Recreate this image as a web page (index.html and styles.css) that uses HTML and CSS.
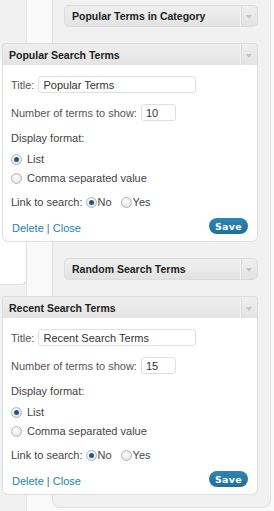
FILE: index.html
```html
<!DOCTYPE html>
<html lang="en">
<head>
    <meta charset="UTF-8">
    <meta name="viewport" content="width=device-width, initial-scale=1.0">
    <title>Widgets</title>
    <link rel="stylesheet" href="styles.css">
</head>
<body>
    <div class="page">
        <div class="left-pane">
            <div class="left-box"></div>
        </div>

        <div class="column">
            <div class="sidebar">

                <div class="widget">
                    <div class="widget-top">
                        <span class="widget-title">Popular Terms in Category</span>
                        <span class="widget-arrow"></span>
                    </div>
                </div>

                <div class="widget open">
                    <div class="widget-top">
                        <span class="widget-title">Popular Search Terms</span>
                        <span class="widget-arrow"></span>
                    </div>
                    <div class="widget-inside">
                        <div class="row field">
                            <label>Title:</label>
                            <input class="text-input wide" type="text" value="Popular Terms">
                        </div>
                        <div class="row field gap-md">
                            <label>Number of terms to show:</label>
                            <input class="text-input short" type="text" value="10">
                        </div>
                        <div class="row line gap-sm">Display format:</div>
                        <div class="row line gap-xs">
                            <span class="radio checked"></span><span>List</span>
                        </div>
                        <div class="row line gap-xxs">
                            <span class="radio"></span><span>Comma separated value</span>
                        </div>
                        <div class="row line gap-sm">
                            <span>Link to search:</span>
                            <span class="radio checked inline"></span><span>No</span>
                            <span class="radio inline far"></span><span>Yes</span>
                        </div>
                        <div class="row actions">
                            <span class="links"><a href="#">Delete</a> | <a href="#">Close</a></span>
                            <button class="save-btn">Save</button>
                        </div>
                    </div>
                </div>

                <div class="widget">
                    <div class="widget-top">
                        <span class="widget-title">Random Search Terms</span>
                        <span class="widget-arrow"></span>
                    </div>
                </div>

                <div class="widget open">
                    <div class="widget-top">
                        <span class="widget-title">Recent Search Terms</span>
                        <span class="widget-arrow"></span>
                    </div>
                    <div class="widget-inside">
                        <div class="row field">
                            <label>Title:</label>
                            <input class="text-input wide" type="text" value="Recent Search Terms">
                        </div>
                        <div class="row field gap-md">
                            <label>Number of terms to show:</label>
                            <input class="text-input short" type="text" value="15">
                        </div>
                        <div class="row line gap-sm">Display format:</div>
                        <div class="row line gap-xs">
                            <span class="radio checked"></span><span>List</span>
                        </div>
                        <div class="row line gap-xxs">
                            <span class="radio"></span><span>Comma separated value</span>
                        </div>
                        <div class="row line gap-sm">
                            <span>Link to search:</span>
                            <span class="radio checked inline"></span><span>No</span>
                            <span class="radio inline far"></span><span>Yes</span>
                        </div>
                        <div class="row actions">
                            <span class="links"><a href="#">Delete</a> | <a href="#">Close</a></span>
                            <button class="save-btn">Save</button>
                        </div>
                    </div>
                </div>

            </div>
        </div>
    </div>
</body>
</html>
```

FILE: styles.css
```css
body {
    margin: 0;
    height: 511px;
    overflow: hidden;
    background-color: #f1f1f1;
    color: #333333;
    font-family: 'Liberation Sans', Arial, sans-serif;
    font-size: 11px;
}

.page {
    display: flex;
    height: 511px;
}

.left-pane {
    width: 27px;
    flex-shrink: 0;
    padding-top: 60px;
    margin-right: -1px;
    position: relative;
    z-index: 0;
}

.left-box {
    height: 224px;
    background-color: #ffffff;
    border-right: 1px solid #dfdfdf;
    border-bottom: 1px solid #dfdfdf;
    border-bottom-right-radius: 6px;
}

.column {
    flex: 1;
    background-color: #f9f9f9;
    border-left: 1px solid #e3e3e3;
    padding-left: 25px;
}

.sidebar {
    width: 206px;
    height: 502px;
    background-color: #f1f1f1;
    border: 1px solid #dfdfdf;
    border-top: none;
    border-radius: 0 0 8px 8px;
    padding-top: 5px;
    padding-left: 11px;
    box-sizing: content-box;
    position: relative;
    z-index: 1;
}

.sidebar > .widget {
    margin-bottom: 16px;
    width: 194px;
}

.sidebar > .widget.open {
    margin-left: -62px;
    width: 256px;
}

.widget-top {
    display: flex;
    align-items: center;
    height: 20px;
    background: linear-gradient(to bottom, #efefef, #e3e3e3);
    border: 1px solid #dcdcdc;
    border-radius: 5px;
    color: #222222;
    font-weight: bold;
    font-size: 10.5px;
}

.widget-title {
    flex: 1;
    padding-left: 7px;
}

.widget.open .widget-top {
    border-bottom: none;
    border-radius: 4px 4px 0 0;
    height: 21px;
}

.widget.open .widget-title {
    padding-left: 6px;
}

.widget-arrow {
    width: 16px;
    height: 20px;
    border-left: 1px solid #f4f4f4;
    box-shadow: inset 1px 0 0 #dadada;
    display: flex;
    align-items: center;
    justify-content: center;
}

.widget-arrow::after {
    content: "";
    border-left: 3px solid transparent;
    border-right: 3px solid transparent;
    border-top: 4px solid #c4c4c4;
    margin-top: 2px;
}

.widget-inside {
    background-color: #ffffff;
    border: 1px solid #dfdfdf;
    border-top: none;
    border-radius: 0 0 6px 6px;
    padding: 11px 8px 7px 8px;
}

.row {
    display: flex;
    align-items: center;
}

.field {
    height: 17px;
    color: #555555;
}

.field label {
    margin-right: 4px;
}

.line {
    height: 14px;
    color: #444444;
}

.gap-md { margin-top: 11px; }
.gap-sm { margin-top: 10px; }
.gap-xs { margin-top: 7px; }
.gap-xxs { margin-top: 5px; }

.text-input {
    height: 17px;
    box-sizing: border-box;
    border: 1px solid #dfdfdf;
    border-radius: 3px;
    padding: 0 4px;
    font-family: inherit;
    font-size: 11px;
    color: #333333;
    background-color: #ffffff;
}

.wide {
    width: 158px;
}

.short {
    width: 35px;
}

.radio {
    width: 9px;
    height: 9px;
    border-radius: 50%;
    border: 1px solid #b5b5b5;
    background: radial-gradient(circle at 40% 35%, #ffffff, #dcdcdc);
    margin-left: 0;
    margin-right: 5px;
    display: flex;
    align-items: center;
    justify-content: center;
    flex-shrink: 0;
}

.radio.checked::after {
    content: "";
    width: 5px;
    height: 5px;
    border-radius: 50%;
    background-color: #1c5a85;
}

.radio.inline {
    margin-left: 3px;
    margin-right: 1px;
}

.radio.far {
    margin-left: 9px;
}

.actions {
    margin-top: 9px;
    height: 16px;
    justify-content: space-between;
}

.links {
    color: #666666;
    padding-top: 3px;
    padding-left: 1px;
}

a {
    color: #2583ad;
    text-decoration: none;
}

.save-btn {
    width: 39px;
    height: 16px;
    margin-right: 1px;
    padding: 0;
    border: none;
    border-radius: 9px;
    background: linear-gradient(to bottom, #2f86b3, #1f6f99);
    color: #ffffff;
    font-family: 'DejaVu Sans', Verdana, sans-serif;
    font-weight: bold;
    font-size: 9.5px;
    letter-spacing: 0.3px;
}
```
